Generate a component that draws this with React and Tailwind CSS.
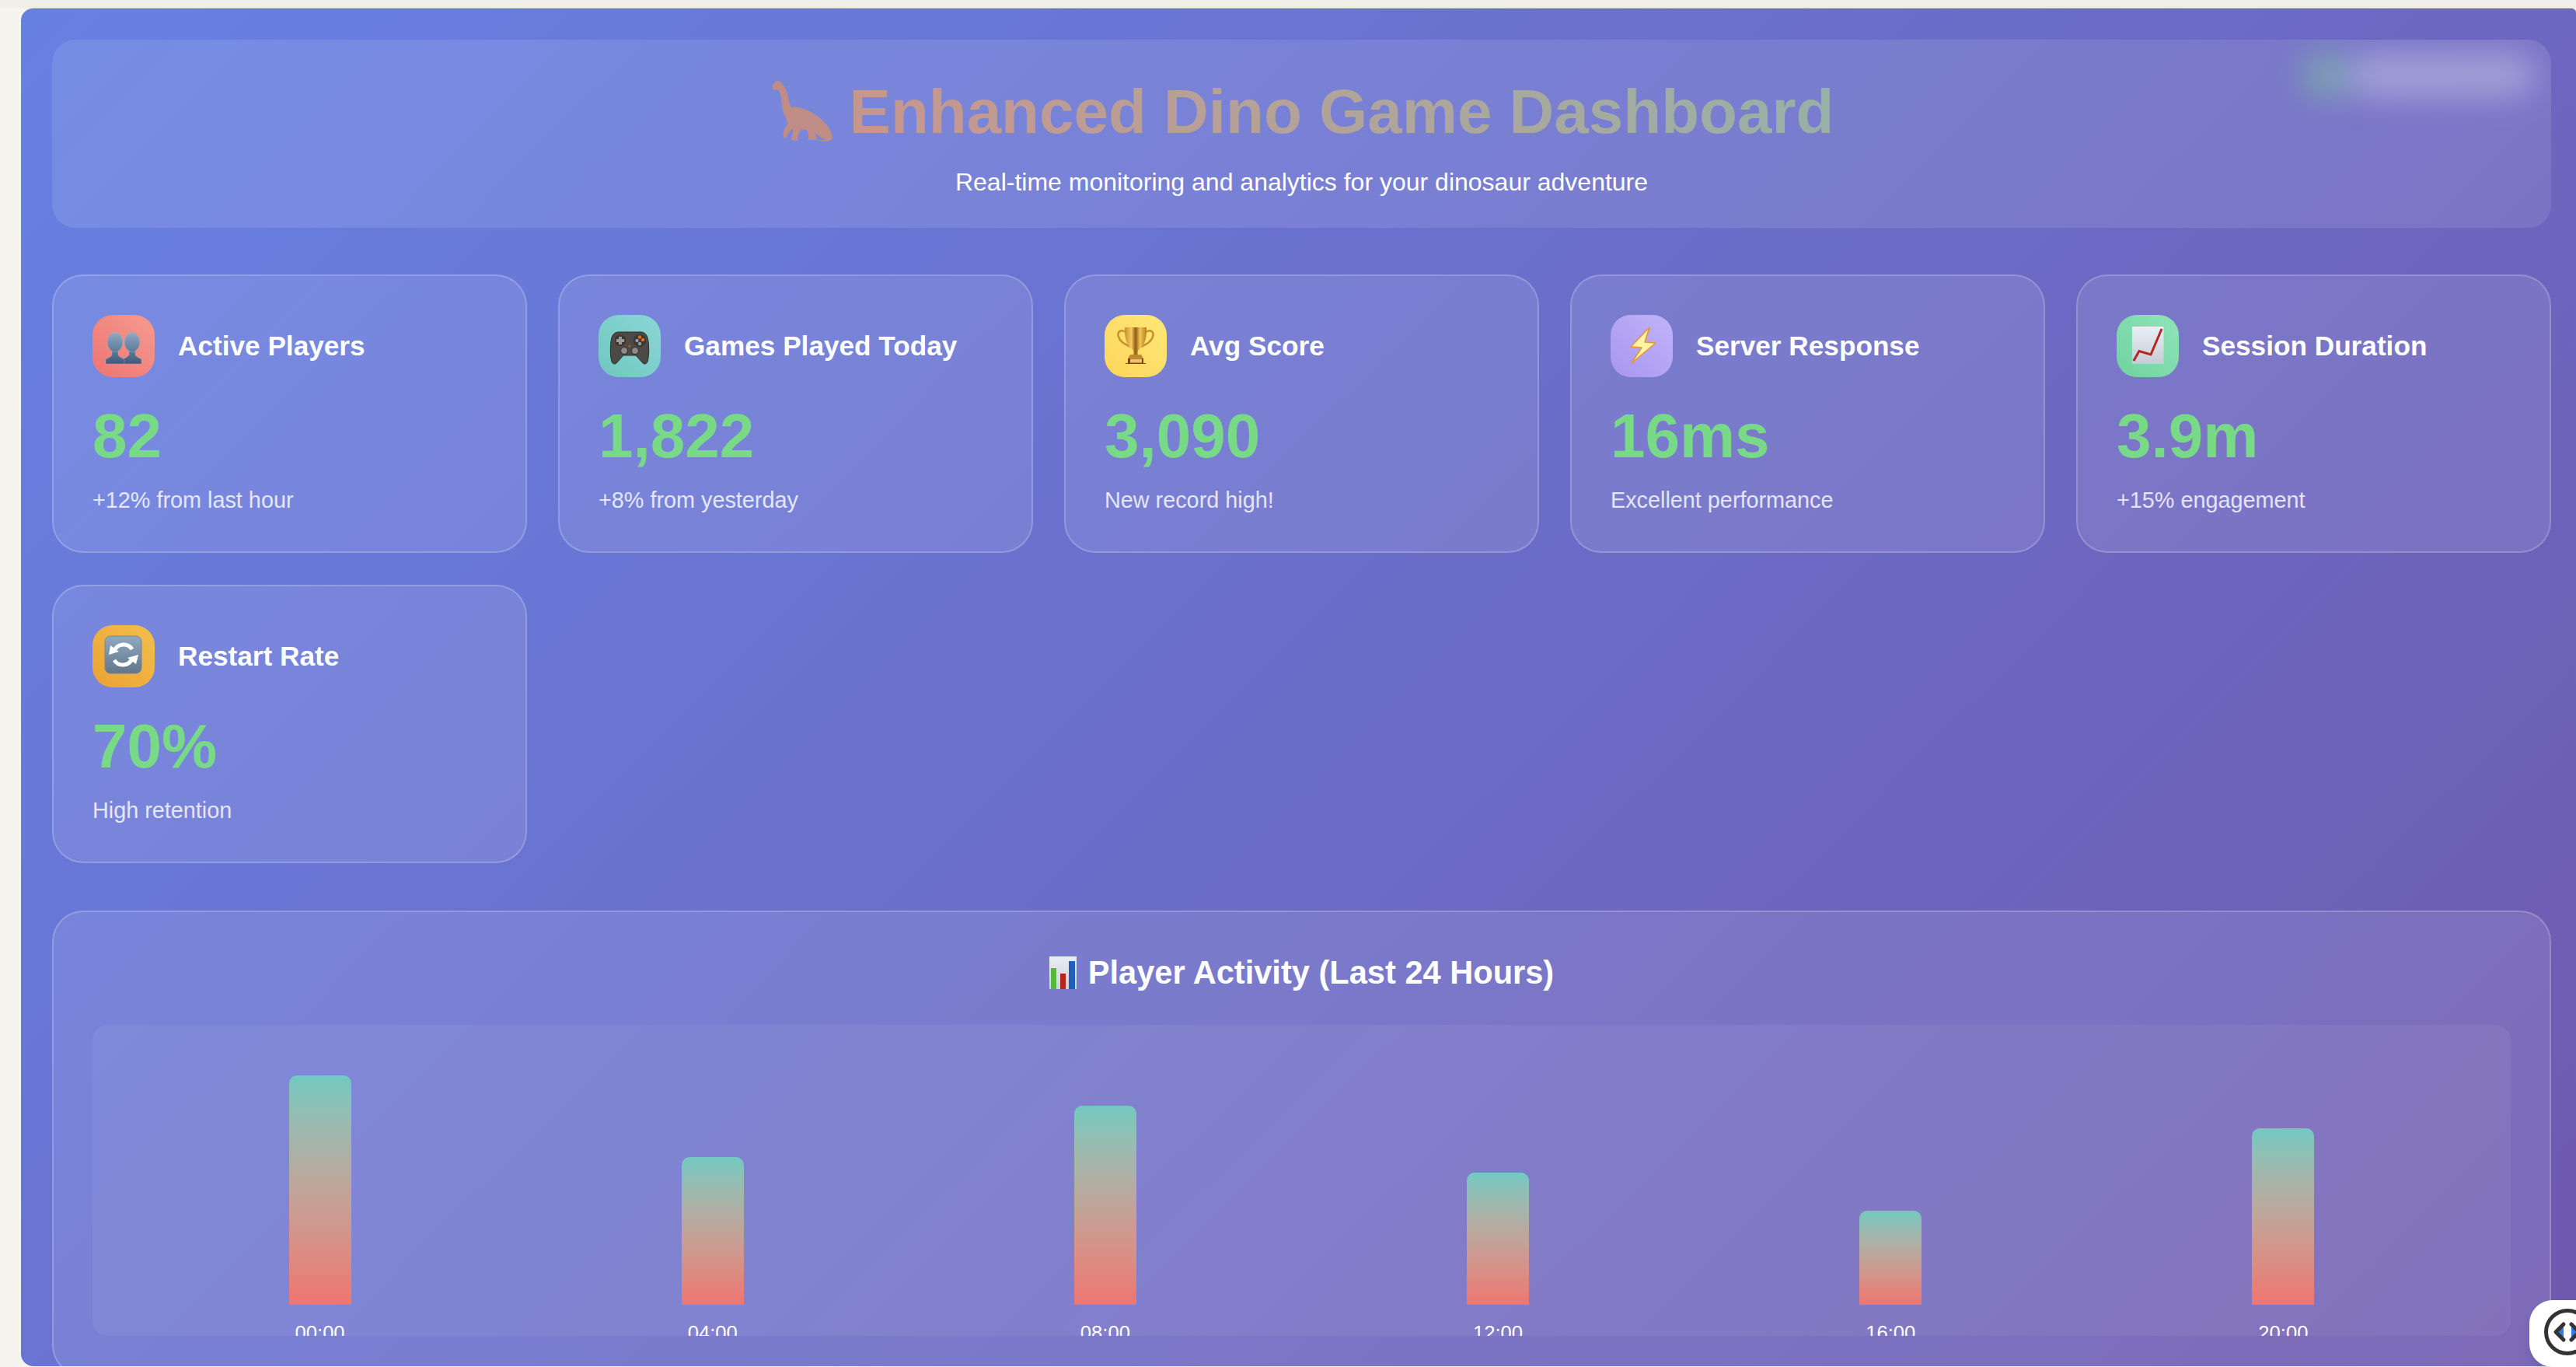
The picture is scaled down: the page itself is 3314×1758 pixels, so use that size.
import React from "react";

const stats = [
  { title: "Active Players", value: "82", note: "+12% from last hour", tint: "from-[#ee7472] to-[#f59a8f]", Icon: UsersIcon },
  { title: "Games Played Today", value: "1,822", note: "+8% from yesterday", tint: "from-[#70c8bf] to-[#8ad6d6]", Icon: PadIcon },
  { title: "Avg Score", value: "3,090", note: "New record high!", tint: "from-[#fdd55a] to-[#fee878]", Icon: TrophyIcon },
  { title: "Server Response", value: "16ms", note: "Excellent performance", tint: "from-[#a896f0] to-[#c0b4f8]", Icon: BoltIcon },
  { title: "Session Duration", value: "3.9m", note: "+15% engagement", tint: "from-[#6fd3a0] to-[#90e4b8]", Icon: TrendIcon },
  { title: "Restart Rate", value: "70%", note: "High retention", tint: "from-[#eba234] to-[#f3bf4c]", Icon: RestartIcon },
];

const activity = [
  { hour: "00:00", height: 295 },
  { hour: "04:00", height: 190 },
  { hour: "08:00", height: 256 },
  { hour: "12:00", height: 170 },
  { hour: "16:00", height: 121 },
  { hour: "20:00", height: 227 },
];

function Person({ x }) {
  return (
    <g transform={`translate(${x} 23)`} fill="url(#personFill)" stroke="#a9bdd2" strokeWidth="0.4">
      <path d="M-4 21V28C-5 31-9 32-12 34V40H12V34C9 32 5 31 4 28V21Z" />
      <ellipse cx="0" cy="12" rx="10" ry="12.500" />
    </g>
  );
}

function UsersIcon() {
  return (
    <svg viewBox="0 0 80 80" className="h-20 w-20">
      <defs>
        <linearGradient id="personFill" gradientUnits="userSpaceOnUse" x1="0" y1="0" x2="0" y2="40">
          <stop offset="0" stopColor="#8fa9c4" />
          <stop offset="1" stopColor="#3f5a78" />
        </linearGradient>
      </defs>
      <Person x={51} />
      <Person x={29} />
    </svg>
  );
}

function PadIcon() {
  return (
    <svg viewBox="0 0 80 80" className="h-20 w-20">
      <path d="M26 22h28c6 0 9 4 10 12 1 9 1 20-1 26-1 3-4 4-6 2l-9-10H32l-9 10c-2 2-5 1-6-2-2-6-2-17-1-26 1-8 4-12 10-12z" fill="#4b4a47" stroke="#2d2c2a" strokeWidth="1" />
      <circle cx="28" cy="33" r="8" fill="#393836" stroke="#6a4a32" strokeWidth="1" />
      <path d="M26 28h4v3h3v4h-3v3h-4v-3h-3v-4h3z" fill="#9a9a96" />
      <circle cx="53" cy="33" r="8" fill="#393836" />
      <circle cx="53" cy="28.500" r="2.200" fill="#e0701f" />
      <circle cx="57" cy="32" r="2.200" fill="#e0701f" />
      <circle cx="49.500" cy="33" r="2.200" fill="#9a9a96" />
      <circle cx="53" cy="37" r="2.200" fill="#9a9a96" />
      <circle cx="33" cy="46" r="4.500" fill="#8b8b88" stroke="#2d2c2a" />
      <circle cx="47" cy="46" r="4.500" fill="#8b8b88" stroke="#2d2c2a" />
      <circle cx="40" cy="40" r="1.500" fill="#b85a1c" />
    </svg>
  );
}

function TrophyIcon() {
  return (
    <svg viewBox="0 0 80 80" className="h-20 w-20">
      <defs>
        <linearGradient id="cupFill" x1="0" y1="0" x2="1" y2="0">
          <stop offset="0" stopColor="#c98f25" />
          <stop offset="0.3" stopColor="#f2cc63" />
          <stop offset="0.5" stopColor="#8f5a12" />
          <stop offset="0.7" stopColor="#f0c558" />
          <stop offset="1" stopColor="#b97e1c" />
        </linearGradient>
      </defs>
      <path d="M27 22c-7-4-11 0-9 6 2 7 9 10 15 13M53 22c7-4 11 0 9 6-2 7-9 10-15 13" fill="none" stroke="#c4922c" strokeWidth="2.500" />
      <path d="M26 16h28c0 12-1 21-8 27-3 2-4 4-3 8h-6c1-4 0-6-3-8-7-6-8-15-8-27z" fill="url(#cupFill)" />
      <path d="M33 51h14l3 5H30z" fill="#c08a28" />
      <path d="M30 56h20v6h3v1H27v-1h3z" fill="#8f3d18" />
      <rect x="33" y="56.500" width="15" height="5" fill="#e8c36e" />
    </svg>
  );
}

function BoltIcon() {
  return (
    <svg viewBox="0 0 80 80" className="h-20 w-20">
      <path d="M50 16 26 41l14 1-13 20 31-26-14-1z" fill="#fff3a8" stroke="#e8962a" strokeWidth="1.600" strokeLinejoin="round" />
    </svg>
  );
}

function TrendIcon() {
  return (
    <svg viewBox="0 0 80 80" className="h-20 w-20">
      <defs>
        <linearGradient id="paperFill" x1="0" y1="0" x2="0" y2="1">
          <stop offset="0" stopColor="#e9eff5" />
          <stop offset="1" stopColor="#c6ccd6" />
        </linearGradient>
      </defs>
      <rect x="20" y="15" width="40.500" height="48" fill="url(#paperFill)" />
      <path d="M22 59 29 46.500 44 51 58 18" fill="none" stroke="#b5261e" strokeWidth="3" />
    </svg>
  );
}

function RestartIcon() {
  return (
    <svg viewBox="0 0 80 80" className="h-20 w-20">
      <defs>
        <linearGradient id="tileFill" x1="0" y1="0" x2="0" y2="1">
          <stop offset="0" stopColor="#8fa9c0" />
          <stop offset="1" stopColor="#62758c" />
        </linearGradient>
      </defs>
      <rect x="16" y="14" width="47" height="48" rx="7" fill="url(#tileFill)" stroke="#7a8794" strokeWidth="1" />
      <path d="M28 33A13 13 0 0 1 51 31" fill="none" stroke="#fff" strokeWidth="5" />
      <path d="M51 43A13 13 0 0 1 28 45" fill="none" stroke="#fff" strokeWidth="5" />
      <path d="M21 38 23 26 34 34zM59 38 56 50 45 42z" fill="#fff" />
    </svg>
  );
}

function BarsEmoji() {
  return (
    <svg viewBox="0 0 35 42" className="h-[42px] w-[35px] shrink-0">
      <defs>
        <linearGradient id="sheetFill" x1="0" y1="0" x2="0" y2="1">
          <stop offset="0" stopColor="#e8eef4" />
          <stop offset="1" stopColor="#cdd3db" />
        </linearGradient>
      </defs>
      <rect width="35" height="42" fill="url(#sheetFill)" />
      <rect x="2" y="15" width="7" height="27" fill="#57b83a" />
      <rect x="14" y="22" width="7" height="20" fill="#b5261e" />
      <rect x="25" y="6" width="8" height="36" fill="#1f5fbf" />
    </svg>
  );
}

function DinoEmoji() {
  return (
    <svg viewBox="9 0 300 285" className="h-[95px] w-[100px] shrink-0">
      <path
        d="M38 22C30 24 28 32 22 36C16 40 18 50 24 56C34 54 44 54 48 64C56 84 56 110 60 134C64 150 76 170 80 186C70 200 60 215 62 232C64 244 72 246 76 236C78 226 86 214 100 206C102 220 92 240 92 250L118 252C114 238 124 220 130 208L152 210C160 226 162 240 156 248L196 250C190 240 188 232 184 222C196 232 210 244 226 246C214 250 202 250 194 248C210 256 240 258 250 246C256 232 240 202 226 186C200 156 150 124 110 122C100 122 92 126 90 120C82 96 78 60 66 42C58 32 48 16 38 22Z"
        fill="#c08d86"
      />
    </svg>
  );
}

function StatCard({ title, value, note, tint, Icon }) {
  return (
    <div className="h-[358px] rounded-[40px] border-2 border-white/20 bg-white/10 p-[50px]">
      <div className="flex items-center gap-[30px]">
        <div className={`h-20 w-20 shrink-0 rounded-[26px] bg-linear-to-tr ${tint}`}>
          <Icon />
        </div>
        <h3 className="text-[35.2px] font-bold text-white">{title}</h3>
      </div>
      <div className="mt-[16px] text-[80px] font-bold text-[#78d986]">{value}</div>
      <div className="mt-px text-[28.8px] text-white/80">{note}</div>
    </div>
  );
}

function ActivityChart() {
  return (
    <div className="rounded-[40px] border-2 border-white/20 bg-white/10 p-[50px]">
      <h2 className="mb-10 flex items-center justify-center gap-[15px] text-[41.6px] leading-[55px] font-bold text-white">
        <BarsEmoji />
        <span>Player Activity (Last 24 Hours)</span>
      </h2>
      <div className="flex h-[400px] items-end justify-around overflow-hidden rounded-[20px] bg-white/5 p-10">
        {activity.map((item) => (
          <div className="relative w-20" key={item.hour} style={{ height: item.height }}>
            <div className="h-full rounded-t-[10px] bg-linear-to-t from-[#ee7570] to-[#72c9c1]" />
            <span className="absolute -bottom-[55px] left-1/2 -translate-x-1/2 text-[25.6px] text-white">{item.hour}</span>
          </div>
        ))}
      </div>
    </div>
  );
}

export default function App() {
  return (
    <div className="relative h-[1758px] w-full overflow-hidden bg-[#f5f4ee] pt-[10px] pb-px pl-[27px] font-['Liberation_Sans',Arial,sans-serif]">
      <div className="absolute inset-x-0 top-0 h-[10px] bg-[#f0eee8]" />
      <div className="relative h-full overflow-hidden rounded-l-[16px] rounded-tr-[6px] border-t border-[#c9c7c2]">
        <div className="h-[3300px] bg-[linear-gradient(135deg,#6781e3,#714d9e)] pt-[40px] pr-[32px] pl-[40px]">
          <header className="relative h-[242px] overflow-hidden rounded-[30px] bg-white/10 pt-[33px] text-center">
            <h1 className="flex items-center justify-center gap-[3px] bg-linear-45 from-[#e67a78] to-[#5cc2ba] bg-clip-text text-[80px] font-bold text-transparent">
              <DinoEmoji />
              <span>Enhanced Dino Game Dashboard</span>
            </h1>
            <p className="mt-[6px] text-[32px] text-white">Real-time monitoring and analytics for your dinosaur adventure</p>
            <div className="absolute -top-[4px] right-0 h-[110px] w-[350px] blur-[20px]">
              <div className="absolute top-[20px] left-[30px] h-[60px] w-[60px] rounded-full bg-[#7fc0a0]/60" />
              <div className="absolute top-[22px] left-[90px] h-[56px] w-[240px] rounded-full bg-white/30" />
            </div>
          </header>
          <div className="mt-[60px] grid grid-cols-5 gap-x-10 gap-y-[41px]">
            {stats.map((stat) => (
              <StatCard key={stat.title} {...stat} />
            ))}
          </div>
          <div className="mt-[61px]">
            <ActivityChart />
          </div>
        </div>
      </div>
      <div className="absolute right-0 bottom-0 flex h-[86px] w-[60px] items-start overflow-hidden rounded-l-[30px] bg-white pt-[11px] pl-[19px] shadow-lg">
        <svg viewBox="0 0 60 60" className="h-[60px] w-[60px] shrink-0">
          <circle cx="30" cy="30" r="27.500" fill="#fff" stroke="#333" strokeWidth="5" />
          <path d="M25 20 15 30l10 10" fill="#2f7bf0" stroke="#333" strokeWidth="5" strokeLinecap="round" strokeLinejoin="round" />
          <path d="M35 20l10 10-10 10" fill="#2f7bf0" stroke="#333" strokeWidth="5" strokeLinecap="round" strokeLinejoin="round" />
        </svg>
      </div>
    </div>
  );
}
